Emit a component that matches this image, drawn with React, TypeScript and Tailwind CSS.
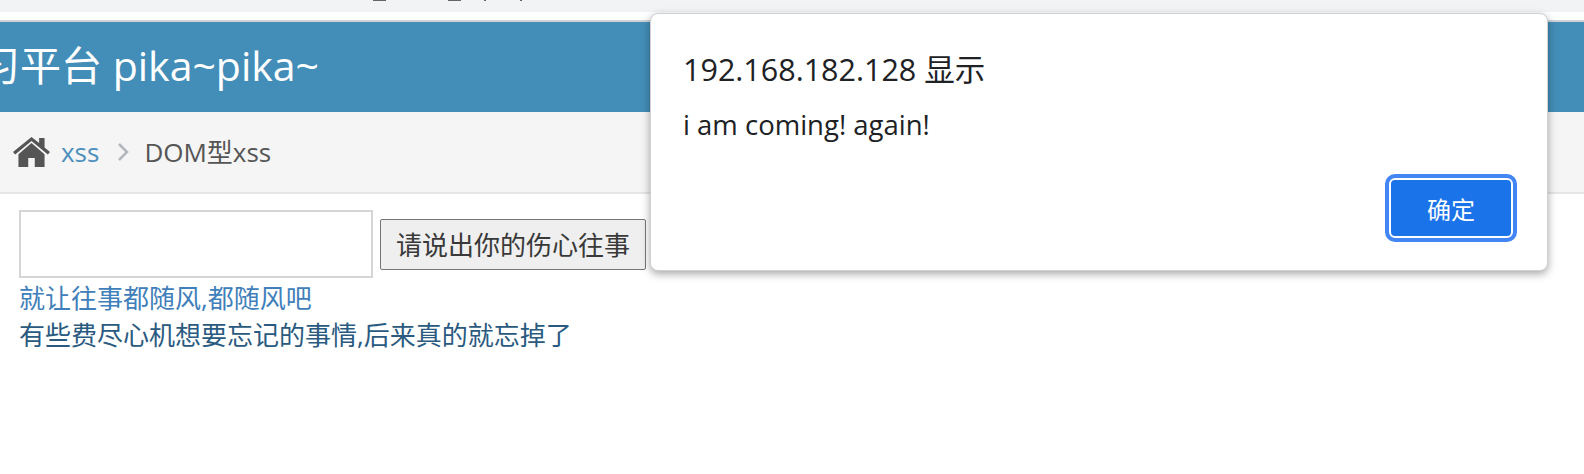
import React from 'react'

const sans = 'font-["Open_Sans","Noto_Sans_CJK_SC",sans-serif]'

function HomeIcon() {
  return (
    <svg width="37" height="30" viewBox="1 2 34 27" preserveAspectRatio="none" className="shrink-0">
      <path d="M6 17.5V29h9v-8h6v8h9V17.5L18 7.5z" fill="#555" />
      <path d="M1 15.5 18 2l7 5.5V3h5v8.5l5 4-2 2.2L18 5.6 3 17.7z" fill="#555" />
    </svg>
  )
}

export default function App() {
  return (
    <div className={`relative h-[474px] w-[1584px] overflow-hidden bg-white ${sans}`}>
      <div className="flex h-3 items-start bg-[#f1f3f4] pl-[373px]">
        <div className="h-px w-[13px] bg-[#666]" />
        <div className="ml-[62px] h-px w-[13px] bg-[#666]" />
        <div className="ml-[23px] h-px w-[2px] bg-[#666]" />
        <div className="ml-[34px] h-px w-[2px] bg-[#666]" />
      </div>
      <div className="h-2 bg-white" />
      <div className="h-[92px] overflow-hidden border-t-2 border-[#cfd3d6] bg-[#438eb9]">
        <div className="ml-[-21px] mt-[15px] text-[41px] leading-[56px] whitespace-nowrap text-white">习平台 pika~pika~</div>
      </div>
      <div className="flex h-[82px] items-center border-b-2 border-[#e5e5e5] bg-[#f5f5f5] pl-[13px] text-[26px] text-[#555]">
        <HomeIcon />
        <span className="ml-[11px] text-[#4c8fbd]">xss</span>
        <svg width="12" height="20" viewBox="0 0 12 20" className="ml-[18px] mr-[15px]">
          <path d="M2 2l8 8-8 8" fill="none" stroke="#b2b6bf" strokeWidth="2.5" />
        </svg>
        <span>DOM型xss</span>
      </div>
      <div className="pl-[19px] pt-[16px] text-[26px] leading-[36px] text-[#393939]">
        <div className="flex items-end">
          <input className="h-[68px] w-[354px] border-2 border-[#d5d5d5] bg-white" />
          <button className="mb-[8px] ml-[7px] h-[51px] w-[266px] rounded-[2px] border border-[#767676] bg-[#efefef] text-[26px] text-[#393939]">
            请说出你的伤心往事
          </button>
        </div>
        <div className="mt-[2px] text-[#3f80ba]">就让往事都随风,都随风吧</div>
        <div className="mt-[1px] text-[#2a5a80]">有些费尽心机想要忘记的事情,后来真的就忘掉了</div>
      </div>
      <div className="absolute left-[650px] top-[13px] flex h-[258px] w-[898px] flex-col rounded-[8px] border border-[#d0d0d0] bg-white px-[32px] pt-[33px] shadow-[0_3px_8px_rgba(0,0,0,0.35)]">
        <div className="text-[30.5px] leading-[44px] text-[#202124]">192.168.182.128 显示</div>
        <div className="mt-[16px] text-[27.5px] leading-[36px] text-[#202124]">i am coming! again!</div>
        <div className="mt-auto mb-[32px] mr-[2px] flex justify-end">
          <button className="h-[60px] w-[124px] rounded-[6px] border-2 border-white bg-[#1a73e8] pt-[3px] text-[24px] text-white outline-[4px] outline-[#4285f4]">
            确定
          </button>
        </div>
      </div>
    </div>
  )
}
